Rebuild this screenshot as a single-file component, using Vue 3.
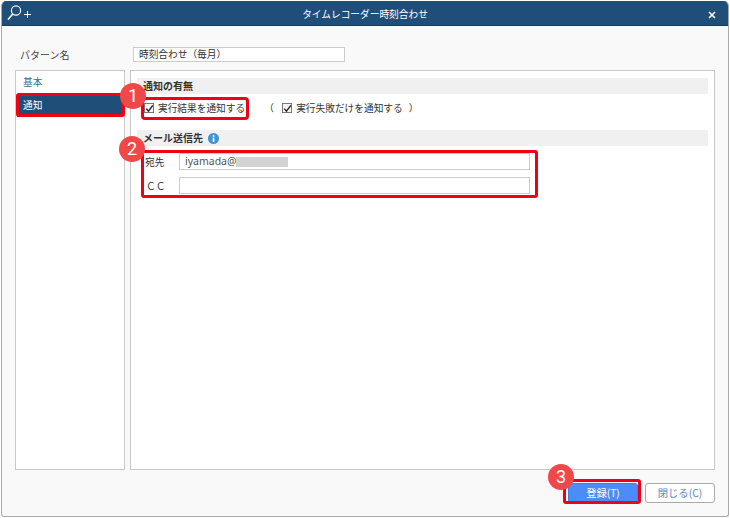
<template>
  <div class="page">
    <div class="dialog">
      <header class="titlebar">
        <svg class="logo" width="30" height="18" viewBox="0 0 30 18">
          <circle cx="10" cy="6.5" r="4.6" fill="none" stroke="#fff" stroke-width="1.1" />
          <path d="M6.8 10 L2 15.5" stroke="#fff" stroke-width="1.6" fill="none" />
          <path d="M18 10.5 H25 M21.5 7 V14" stroke="#fff" stroke-width="1" fill="none" />
        </svg>
        <span class="title">タイムレコーダー時刻合わせ</span>
        <svg class="close" width="8" height="8" viewBox="0 0 8 8">
          <path d="M1 1 L7 7 M7 1 L1 7" stroke="#fff" stroke-width="1.7" />
        </svg>
      </header>

      <div class="content">
        <div class="name-row">
          <label class="name-label">パターン名</label>
          <div class="name-input">時刻合わせ（毎月）</div>
        </div>

        <div class="panels">
          <nav class="side">
            <div class="side-item">基本</div>
            <div class="side-item active">通知</div>
          </nav>

          <main class="main">
            <div class="section-head">通知の有無</div>
            <div class="check-row">
              <label class="check">
                <span class="box"><svg width="9" height="9" viewBox="0 0 9 9"><path d="M1.2 4.6 L3.5 7.2 L7.8 1.4" fill="none" stroke="#222" stroke-width="1.4" /></svg></span>
                実行結果を通知する
              </label>
              <span class="paren open">（</span>
              <label class="check">
                <span class="box"><svg width="9" height="9" viewBox="0 0 9 9"><path d="M1.2 4.6 L3.5 7.2 L7.8 1.4" fill="none" stroke="#222" stroke-width="1.4" /></svg></span>
                実行失敗だけを通知する
              </label>
              <span class="paren close-paren">）</span>
            </div>

            <div class="section-head mail">
              メール送信先
              <svg class="info" width="11" height="11" viewBox="0 0 11 11">
                <circle cx="5.5" cy="5.5" r="5.5" fill="#3f94d4" />
                <rect x="4.7" y="4.6" width="1.7" height="4.2" fill="#fff" />
                <rect x="4.7" y="2.2" width="1.7" height="1.6" fill="#fff" />
              </svg>
            </div>
            <div class="field-row">
              <span class="field-label">宛先</span>
              <div class="field">iyamada@<span class="masked"></span></div>
            </div>
            <div class="field-row second">
              <span class="field-label cc">ＣＣ</span>
              <div class="field"></div>
            </div>
          </main>
        </div>

        <div class="actions">
          <button class="btn primary">登録(T)</button>
          <button class="btn">閉じる(C)</button>
        </div>
      </div>
    </div>

    <!-- annotations drawn over the screenshot -->
    <div class="mark m-nav"></div>
    <div class="mark m-check"></div>
    <div class="mark m-mail"></div>
    <div class="mark m-btn"></div>
    <span class="badge b1">1</span>
    <span class="badge b2">2</span>
    <span class="badge b3">3</span>
  </div>
</template>

<script setup>
</script>

<style>
html,
body {
  margin: 0;
  background: #fff;
}
</style>

<style scoped>
.page {
  position: relative;
  width: 730px;
  height: 518px;
  overflow: hidden;
  background: #fff;
  font-family: "Noto Sans CJK JP", "Liberation Sans", sans-serif;
  font-size: 9.7px;
  color: #333;
}

.dialog {
  box-sizing: border-box;
  width: 728px;
  height: 516px;
  margin: 1px 0 0 1px;
  display: flex;
  flex-direction: column;
  background: #f9f9f9;
  border: 1px solid #aaa;
  border-top: 0;
  border-radius: 5px 5px 3px 3px;
  overflow: hidden;
}

.titlebar {
  height: 25px;
  flex: none;
  display: flex;
  align-items: center;
  position: relative;
  background: #1f4e79;
  border-bottom: 1px solid #183c5e;
  box-sizing: border-box;
  color: #fff;
}

.logo {
  margin-left: 4px;
}

.title {
  position: absolute;
  left: 0;
  right: 0;
  top: 6px;
  text-align: center;
  font-size: 9.7px;
}

.close {
  position: absolute;
  right: 12px;
  top: 10px;
}

.content {
  flex: 1;
  display: flex;
  flex-direction: column;
  padding: 20px 13px 0 13px;
}

.name-row {
  display: flex;
  align-items: center;
  height: 16px;
}

.name-label {
  width: 118px;
  padding-left: 5px;
  box-sizing: border-box;
  font-size: 10px;
  color: #444;
}

.name-input {
  box-sizing: border-box;
  width: 212px;
  height: 15px;
  line-height: 13px;
  border: 1px solid #ccc;
  background: #fff;
  padding-left: 5px;
  font-size: 9.7px;
}

.panels {
  display: flex;
  gap: 5px;
  margin-top: 8px;
  height: 400px;
}

.side,
.main {
  box-sizing: border-box;
  background: #fff;
  border: 1px solid #c8c8c8;
}

.side {
  width: 110px;
  padding: 1px;
}

.side-item {
  height: 20px;
  line-height: 20px;
  padding-left: 6px;
  font-size: 9.7px;
  color: #3a6a9a;
}

.side-item.active {
  margin-top: 2px;
  height: 23px;
  line-height: 23px;
  background: #1f4e79;
  color: #fff;
}

.main {
  flex: 1;
  padding: 7px 6px 0 6px;
}

.section-head {
  height: 16px;
  line-height: 16px;
  background: #f0f0f0;
  padding-left: 6px;
  font-size: 10px;
  font-weight: 700;
  color: #333;
  display: flex;
  align-items: center;
}

.section-head.mail {
  margin-top: 12px;
}

.info {
  margin-left: 5px;
}

.check-row {
  display: flex;
  align-items: center;
  height: 20px;
  margin-top: 4px;
  padding-left: 7px;
  font-size: 9.7px;
  white-space: nowrap;
}

.check {
  display: flex;
  align-items: center;
  gap: 4px;
}

.box {
  box-sizing: border-box;
  width: 10px;
  height: 10px;
  border: 1px solid #777;
  background: #f4f4f4;
  display: flex;
  align-items: center;
  justify-content: center;
}

.box svg {
  flex: none;
}

.paren {
  width: 11px;
}

.paren.open {
  margin: 0 7px 0 19px;
}

.paren.close-paren {
  margin-left: 6px;
}

.field-row {
  display: flex;
  align-items: center;
  height: 17px;
  margin-top: 7px;
  padding-left: 8px;
}

.field-row.second {
  margin-top: 7px;
}

.field-label {
  width: 34px;
  flex: none;
  font-size: 9.7px;
}

.field-label.cc {
  padding-left: 1px;
  box-sizing: border-box;
}

.field {
  box-sizing: border-box;
  width: 351px;
  height: 17px;
  line-height: 15px;
  border: 1px solid #ccc;
  background: #fff;
  padding-left: 5px;
  font-family: "Noto Sans", "Liberation Sans", sans-serif;
  font-size: 10.5px;
  display: flex;
  align-items: center;
  color: #555;
}

.masked {
  width: 52px;
  height: 10px;
  background: #d2d2d2;
}

.actions {
  display: flex;
  justify-content: flex-end;
  gap: 7px;
  margin-top: 13px;
}

.btn {
  box-sizing: border-box;
  width: 70px;
  height: 20px;
  padding: 0;
  border: 1px solid #aaa;
  border-radius: 3px;
  background: #fff;
  color: #5c88bd;
  font-family: inherit;
  font-size: 10.3px;
  line-height: 14px;
}

.btn.primary {
  background: #4a8df8;
  border-color: #4a80d0;
  color: #fff;
}

.mark {
  position: absolute;
  box-sizing: border-box;
  border: 3px solid #f00014;
  border-radius: 3px;
}

.m-nav {
  left: 16px;
  top: 93px;
  width: 109px;
  height: 24px;
}

.m-check {
  left: 141px;
  top: 97px;
  width: 108px;
  height: 23px;
  border-radius: 4px;
}

.m-mail {
  left: 141px;
  top: 150px;
  width: 397px;
  height: 48px;
}

.m-btn {
  left: 563px;
  top: 479px;
  width: 78px;
  height: 25px;
}

.badge {
  position: absolute;
  width: 26px;
  height: 26px;
  border-radius: 50%;
  background: #f04848;
  color: #fff;
  font-family: Roboto, "Liberation Sans", sans-serif;
  font-weight: 400;
  font-size: 18px;
  line-height: 26px;
  text-align: center;
}

.b1 {
  left: 120px;
  top: 83px;
}

.b2 {
  left: 119px;
  top: 136px;
}

.b3 {
  left: 548px;
  top: 464px;
}
</style>
